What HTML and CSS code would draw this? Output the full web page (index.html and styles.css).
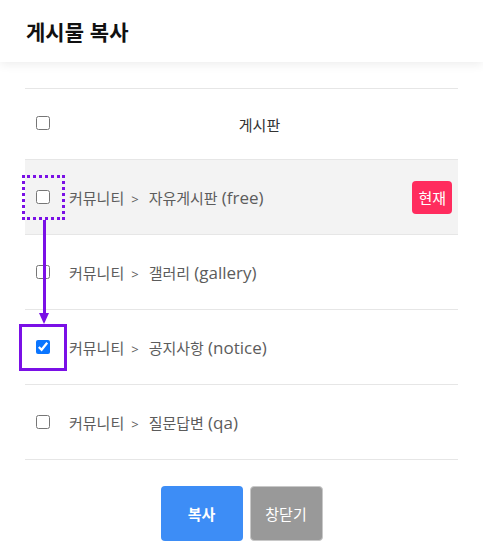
FILE: index.html
```html
<!DOCTYPE html>
<html lang="ko">
<head>
<meta charset="utf-8">
<link rel="stylesheet" href="styles.css">
</head>
<body>
<header class="top">
  <h1 class="title">게시물 복사</h1>
</header>
<main class="content">
  <div class="list">
    <div class="row head">
      <div class="cell-check"><input type="checkbox" class="cb"></div>
      <div class="cell-name center">게시판</div>
    </div>
    <div class="row current">
      <div class="cell-check"><input type="checkbox" class="cb"></div>
      <div class="cell-name">커뮤니티<span class="gt">&gt;</span>자유게시판 <span class="en">(free)</span></div>
      <span class="badge">현재</span>
    </div>
    <div class="row">
      <div class="cell-check"><input type="checkbox" class="cb"></div>
      <div class="cell-name">커뮤니티<span class="gt">&gt;</span>갤러리 <span class="en">(gallery)</span></div>
    </div>
    <div class="row">
      <div class="cell-check"><input type="checkbox" class="cb" checked></div>
      <div class="cell-name">커뮤니티<span class="gt">&gt;</span>공지사항 <span class="en">(notice)</span></div>
    </div>
    <div class="row">
      <div class="cell-check"><input type="checkbox" class="cb"></div>
      <div class="cell-name">커뮤니티<span class="gt">&gt;</span>질문답변 <span class="en">(qa)</span></div>
    </div>
  </div>
  <div class="actions">
    <button class="btn primary">복사</button>
    <button class="btn secondary">창닫기</button>
  </div>
  <div class="anno-dotted"></div>
  <div class="anno-line"></div>
  <div class="anno-head"></div>
  <div class="anno-solid"></div>
</main>
</body>
</html>
```
FILE: styles.css
```css
* { box-sizing: border-box; }
html, body { margin: 0; padding: 0; background: #fff; }
body {
  font-family: "Noto Sans CJK KR", "Noto Sans", sans-serif;
  color: #555;
  width: 483px;
  height: 549px;
  overflow: hidden;
}
.top {
  height: 62px;
  padding-left: 26px;
  display: flex;
  align-items: center;
  box-shadow: 0 2px 10px rgba(0,0,0,0.08);
  position: relative;
  z-index: 1;
}
.title {
  margin: 0;
  font-size: 21px;
  font-weight: 700;
  color: #111;
  line-height: 1;
}
.content {
  position: relative;
  padding: 26px 25px 0 25px;
}
.list {
  border-top: 1px solid #e6e6e6;
}
.row {
  display: flex;
  align-items: center;
  height: 75px;
  border-bottom: 1px solid #e6e6e6;
}
.row.head { height: 71px; }
.row.head .cell-check { margin-top: -3px; }
.row.current { background: #f3f3f3; }
.cell-check {
  width: 36px;
  padding-left: 11px;
  display: flex;
  align-items: center;
}
.cb {
  margin: 0;
  width: 14px;
  height: 14px;
  accent-color: #0a75ff;
}
.cell-name {
  flex: 1;
  padding-left: 8px;
  font-size: 15px;
  color: #5c5c5c;
  white-space: nowrap;
}
.gt {
  font-family: "Open Sans", sans-serif;
  font-size: 13px;
  margin: 0 10px 0 7px;
}
.en {
  font-family: "Open Sans", sans-serif;
  font-size: 17px;
}
.cell-name.center {
  padding-left: 0;
  text-align: center;
  color: #333;
}
.badge {
  background: #ff2c5e;
  color: #fff;
  font-size: 15px;
  line-height: 21px;
  padding: 6px 6px;
  border-radius: 4px;
  margin-right: 6px;
}
.actions {
  display: flex;
  justify-content: center;
  gap: 7px;
  margin-top: 26px;
}
.btn {
  height: 55px;
  border-radius: 4px;
  font-family: inherit;
  font-size: 15px;
  color: #fff;
  cursor: pointer;
}
.btn.primary {
  width: 82px;
  background: #3d8df6;
  border: none;
  font-weight: 700;
}
.btn.secondary {
  width: 73px;
  background: #999;
  border: 1px solid #c8c8c8;
}
.anno-dotted {
  position: absolute;
  left: 22px;
  top: 113px;
  width: 43px;
  height: 45px;
  border: 3px dotted #7a10e6;
}
.anno-line {
  position: absolute;
  left: 43px;
  top: 158px;
  width: 3px;
  height: 96px;
  background: #7a10e6;
}
.anno-head {
  position: absolute;
  left: 39px;
  top: 251px;
  width: 0;
  height: 0;
  border-left: 5.5px solid transparent;
  border-right: 5.5px solid transparent;
  border-top: 11px solid #7a10e6;
}
.anno-solid {
  position: absolute;
  left: 19px;
  top: 262px;
  width: 48px;
  height: 47px;
  border: 3px solid #7a10e6;
}
```
